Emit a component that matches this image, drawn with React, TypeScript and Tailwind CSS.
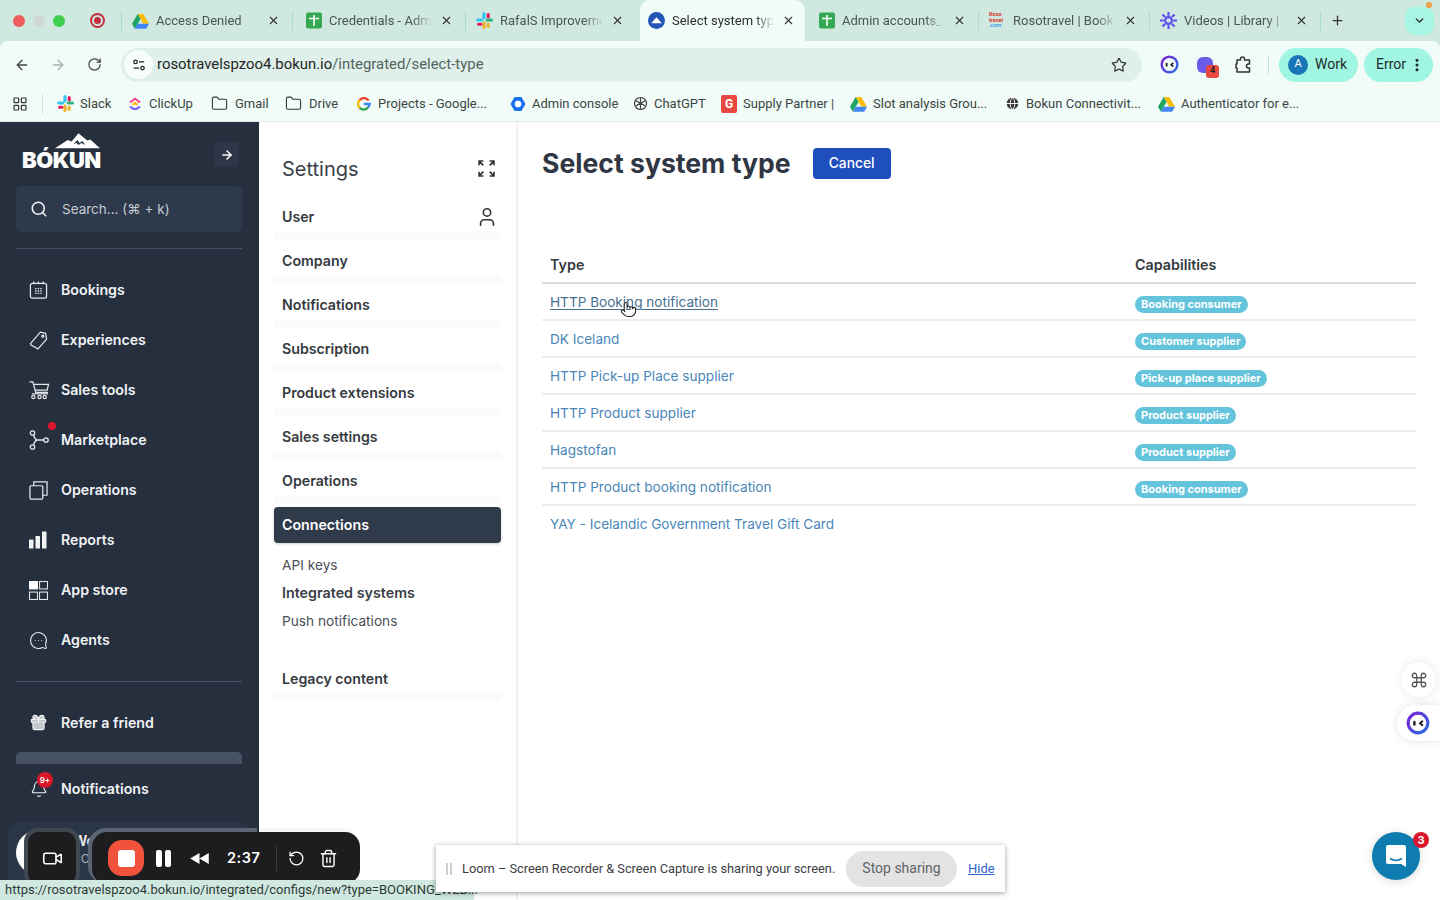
import React from "react";
import { ArrowLeft, ArrowRight, RotateCw, Star, Search, Gift, Bell, User, Video, RotateCcw, Trash2, Command, X, Plus, ChevronDown, Folder, Globe, MoreVertical, LayoutGrid, Pointer, MessageCircleMore } from "lucide-react";

const Drive = () => (
  <svg viewBox="0 0 24 22" className="w-[17px] h-[16px] shrink-0">
    <path d="M8 1h8l8 14h-8z" fill="#fbbc04" />
    <path d="M8 1 0 15l4 7 8-14z" fill="#1fa463" />
    <path d="M8 15h16l-4 7H4z" fill="#4285f4" />
  </svg>
);
const Sheets = () => (
  <svg viewBox="0 0 16 16" className="w-[16px] h-[17px] shrink-0">
    <rect width="16" height="16" rx="2" fill="#34a853" />
    <path d="M3 6h10M8 2.500v11" stroke="#fff" strokeWidth="1.600" />
  </svg>
);
const Slack = () => (
  <svg viewBox="0 0 16 16" className="w-[17px] h-[17px] shrink-0">
    <rect x="0" y="6" width="7" height="3" rx="1.500" fill="#36c5f0" />
    <rect x="6" y="0" width="3" height="7" rx="1.500" fill="#36c5f0" />
    <rect x="9" y="6" width="7" height="3" rx="1.500" fill="#2eb67d" />
    <rect x="10" y="1" width="3" height="5" rx="1.500" fill="#e01e5a" />
    <rect x="6" y="9" width="3" height="7" rx="1.500" fill="#ecb22e" />
    <rect x="1" y="10" width="5" height="3" rx="1.500" fill="#e01e5a" />
    <rect x="10" y="10" width="3" height="5" rx="1.500" fill="#ecb22e" />
  </svg>
);
const ClickUp = () => (
  <svg viewBox="0 0 16 16" className="w-[14px] h-[16px] shrink-0" fill="none" strokeWidth="2.400" strokeLinecap="round">
    <path d="M3 5.500 8 2l5 3.500" stroke="#f9488e" />
    <path d="M3 11.500c3 3.200 7 3.200 10 0" stroke="#7b5cf0" />
    <path d="M6 8.500 8 7l2 1.500" stroke="#ffb300" />
  </svg>
);
const GoogleG = () => (
  <svg viewBox="0 0 16 16" className="w-[14px] h-[14px] shrink-0" fill="none" strokeWidth="2.800">
    <path d="M13.200 4A6.400 6.400 0 0 0 3 3.700" stroke="#ea4335" />
    <path d="M3 3.600a6.400 6.400 0 0 0 0 8.800" stroke="#fbbc04" />
    <path d="M3 12.400a6.400 6.400 0 0 0 9.800-.6" stroke="#34a853" />
    <path d="M12.800 11.800A6.400 6.400 0 0 0 14.400 8H8" stroke="#4285f4" />
  </svg>
);
const AdminHex = () => (
  <svg viewBox="0 0 16 16" className="w-[16px] h-[16px] shrink-0">
    <path d="M4.500 1h7L15.500 8l-4 7h-7L.5 8z" fill="#1a73e8" />
    <circle cx="8" cy="8" r="3.200" fill="#fff" />
  </svg>
);
const GptIcon = () => (
  <svg viewBox="0 0 16 16" className="w-[15px] h-[15px] shrink-0" fill="none" stroke="#444" strokeWidth="1.300">
    <circle cx="8" cy="8" r="6.400" />
    <path d="M8 1.600v6l5 3M8 7.600l-5 3M3 5l5 2.600L13 5M8 7.600v6.800" />
  </svg>
);
const RedG = () => (
  <span className="w-[16px] h-[18px] rounded-[2px] bg-[#e8483f] text-white text-[12px] font-bold flex items-center justify-center shrink-0">G</span>
);
const RosoIcon = () => (
  <span className="w-[17px] h-[17px] shrink-0 flex flex-col text-[5.500px] leading-[5.500px] font-bold">
    <span className="text-[#d8352a]">Roso</span>
    <span className="text-[#d8352a]">travel</span>
    <span className="text-[#4aa3df]">.com</span>
  </span>
);
const BurstIcon = () => (
  <svg viewBox="0 0 16 16" className="w-[17px] h-[17px] shrink-0" fill="none" stroke="#5b4df0" strokeWidth="2">
    <circle cx="8" cy="8" r="3.200" />
    <path d="M8 0v3.500M8 12.500V16M0 8h3.500M12.500 8H16M2.300 2.300l2.500 2.500M11.200 11.200l2.500 2.500M2.300 13.700l2.500-2.500M11.200 4.800l2.500-2.500" />
  </svg>
);
const BokunTab = () => (
  <svg viewBox="0 0 16 16" className="w-[17px] h-[17px] shrink-0">
    <circle cx="8" cy="8" r="8" fill="#2456b8" />
    <path d="M3 10.500 8 5l5 5.500z" fill="#fff" />
  </svg>
);
const Face = ({ cls }: { cls: string }) => (
  <svg viewBox="0 0 20 20" className={cls} fill="none">
    <defs>
      <linearGradient id="ring" x1="0" y1="0" x2="1" y2="1">
        <stop offset="0" stopColor="#7c22d8" />
        <stop offset="1" stopColor="#2b6fe0" />
      </linearGradient>
    </defs>
    <circle cx="10" cy="10" r="8.200" stroke="url(#ring)" strokeWidth="2.600" />
    <rect x="6" y="8.200" width="2" height="4" rx="1" fill="#222" />
    <path d="M14 8.200 11.800 10.200 14 12.200" stroke="#222" strokeWidth="1.700" />
  </svg>
);

const tabs = [
  { t: "Access Denied", i: <Drive />, after: "w-[1px] h-[20px] mr-[2px] bg-[#a9dccd] shrink-0" },
  { t: "Credentials - Adm", i: <Sheets />, after: "w-[1px] h-[20px] bg-[#a9dccd] shrink-0" },
  { t: "RafalS Improveme", i: <Slack />, after: "w-[1px] shrink-0" },
  { t: "Select system typ", i: <BokunTab />, active: true, after: "w-[3px] shrink-0" },
  { t: "Admin accounts_", i: <Sheets />, after: "w-[1px] h-[20px] bg-[#a9dccd] shrink-0" },
  { t: "Rosotravel | Book", i: <RosoIcon />, after: "w-[1px] h-[20px] bg-[#a9dccd] shrink-0" },
  { t: "Videos | Library |", i: <BurstIcon />, after: "w-[1px] h-[20px] bg-[#a9dccd] shrink-0" },
];

const bookmarks = [
  { t: "Slack", i: <Slack />, w: "w-[71px]", g: "gap-[6px]" },
  { t: "ClickUp", i: <ClickUp />, w: "w-[83px]", g: "gap-[7px]" },
  { t: "Gmail", i: <Folder className="w-[17px] h-[17px] text-[#333] shrink-0" strokeWidth={1.500} />, w: "w-[74px]", g: "gap-[7px]" },
  { t: "Drive", i: <Folder className="w-[17px] h-[17px] text-[#333] shrink-0" strokeWidth={1.500} />, w: "w-[72px]", g: "gap-[7px]" },
  { t: "Projects - Google...", i: <GoogleG />, w: "w-[153px]", g: "gap-[7px]" },
  { t: "Admin console", i: <AdminHex />, w: "w-[123px]", g: "gap-[6px]" },
  { t: "ChatGPT", i: <GptIcon />, w: "w-[88px]", g: "gap-[6px]" },
  { t: "Supply Partner |", i: <RedG />, w: "w-[129px]", g: "gap-[6px]" },
  { t: "Slot analysis Grou...", i: <Drive />, w: "w-[155px]", g: "gap-[6px]" },
  { t: "Bokun Connectivit...", i: <Globe className="w-[15px] h-[15px] text-white fill-[#333] shrink-0" strokeWidth={1.500} />, w: "w-[153px]", g: "gap-[6px]" },
  { t: "Authenticator for e...", i: <Drive />, w: "w-[150px]", g: "gap-[6px]" },
];

const stroke = { fill: "none", stroke: "#e5e7eb", strokeWidth: 1.300 };
const Calendar = () => (
  <svg viewBox="0 0 20 20" className="w-[19px] h-[19px]" {...stroke}>
    <rect x="1.500" y="2.500" width="17" height="15.500" rx="2" />
    <path d="M5 0.500v3M10 0.500v3M15 0.500v3" />
    <path d="M6.500 8h7M6.500 10.500h7M6.500 13h7" strokeDasharray="1.500 1.200" strokeWidth="1.500" />
  </svg>
);
const TagIcon = () => (
  <svg viewBox="0 0 20 20" className="w-[19px] h-[19px]" {...stroke}>
    <path d="M12 1.200 17.500 2.500 18.500 8.500 9.500 18.800 2 14.800 1.500 13.200z" strokeLinejoin="round" />
    <circle cx="14.500" cy="5.500" r="1.100" />
  </svg>
);
const Cart = () => (
  <svg viewBox="0 0 22 20" className="w-[21px] h-[19px]" {...stroke}>
    <path d="M0.500 1h3.500l3 11h13" />
    <path d="M5 3.500h15.500l-1.500 6H6.500" />
    <path d="M3 13.500h17" />
    <circle cx="4.500" cy="16.800" r="1.700" />
    <circle cx="11" cy="16.800" r="1.700" />
    <circle cx="16.500" cy="16.800" r="1.700" />
  </svg>
);
const Market = () => (
  <svg viewBox="0 0 20 20" className="w-[20px] h-[20px]" {...stroke}>
    <circle cx="3.500" cy="3" r="2.200" />
    <circle cx="3.500" cy="17" r="2.200" />
    <circle cx="17" cy="10" r="2.200" />
    <path d="M4.500 5c1 3 2 5 4 5h6.300M4.500 15c1-3 2-5 4-5" />
  </svg>
);
const Stack = () => (
  <svg viewBox="0 0 20 20" className="w-[19px] h-[19px]" {...stroke}>
    <rect x="1" y="5" width="13.500" height="14" rx="1" />
    <path d="M5 5V1h14v14h-4.500" />
  </svg>
);
const Bars = () => (
  <svg viewBox="0 0 18 18" className="w-[18px] h-[18px]" fill="#f1f3f5">
    <rect x="0" y="8.500" width="4.500" height="9" rx=".6" />
    <rect x="6.500" y="5" width="4.500" height="12.500" rx=".6" />
    <rect x="13" y="0.500" width="4.500" height="17" rx=".6" />
  </svg>
);
const Apps = () => (
  <svg viewBox="0 0 18 18" className="w-[19px] h-[19px]" fill="none" stroke="#e5e7eb" strokeWidth="1">
    <rect x="0.500" y="0.500" width="7.500" height="7" fill="#fff" stroke="#fff" />
    <rect x="10" y="0.500" width="7.500" height="7" />
    <rect x="0.500" y="10.500" width="7.500" height="7" />
    <rect x="10" y="10.500" width="7.500" height="7" />
  </svg>
);

const nav = [
  { t: "Bookings", i: <Calendar /> },
  { t: "Experiences", i: <TagIcon /> },
  { t: "Sales tools", i: <Cart /> },
  { t: "Marketplace", i: <Market />, dot: true },
  { t: "Operations", i: <Stack /> },
  { t: "Reports", i: <Bars /> },
  { t: "App store", i: <Apps /> },
  { t: "Agents", i: <MessageCircleMore className="w-[19px] h-[19px] text-[#e5e7eb] -scale-x-100" strokeWidth={1.300} /> },
];

const settingsTop = ["Company", "Notifications", "Subscription", "Product extensions", "Sales settings", "Operations"];

const rows = [
  { t: "HTTP Booking notification", c: "Booking consumer", hover: true },
  { t: "DK Iceland", c: "Customer supplier" },
  { t: "HTTP Pick-up Place supplier", c: "Pick-up place supplier" },
  { t: "HTTP Product supplier", c: "Product supplier" },
  { t: "Hagstofan", c: "Product supplier" },
  { t: "HTTP Product booking notification", c: "Booking consumer" },
  { t: "YAY - Icelandic Government Travel Gift Card", c: "" },
];

function SettingItem({ t, right }: { t: string; right?: React.ReactNode }) {
  return (
    <div className="h-[44px] mx-[15px] px-[8px] flex items-center justify-between text-[14.200px] font-semibold text-[#343a40] border-b-[8px] border-[#fbfbfb] pt-[8px] box-border">
      <span>{t}</span>
      {right}
    </div>
  );
}

export default function App() {
  return (
    <div className="relative w-[1440px] h-[900px] overflow-hidden bg-[#cfe8e0] flex flex-col [font-family:Inter,sans-serif]">
      {/* Tab strip */}
      <div className="h-[41px] shrink-0 bg-[#cfe8e0] flex items-center relative [font-family:Roboto,sans-serif]">
        <div className="w-[98px] pl-[13px] flex items-center gap-[8px] shrink-0">
          <span className="w-[12px] h-[12px] rounded-full bg-[#ee5a5e]" />
          <span className="w-[12px] h-[12px] rounded-full bg-[#d2d7d5]" />
          <span className="w-[12px] h-[12px] rounded-full bg-[#3fce4f]" />
        </div>
        <div className="w-[23px] shrink-0 -ml-[8px] mr-[8px] flex justify-center -translate-x-[4px]">
          <span className="w-[15px] h-[15px] rounded-full border-[2px] border-[#c2303f] flex items-center justify-center">
            <span className="w-[7px] h-[7px] rounded-full bg-[#c2303f]" />
          </span>
        </div>
        <span className="w-[1px] h-[20px] bg-[#a9dccd] shrink-0" />
        {tabs.map((tab) => (
          <React.Fragment key={tab.t}>
            <div
              className={
                tab.active
                  ? "ml-[3px] w-[165px] h-[41px] self-end bg-[#f1fbf8] rounded-t-[10px] flex items-center pl-[8px] pr-[10px] shrink-0"
                  : "w-[170px] h-[41px] flex items-center pl-[10px] pr-[12px] shrink-0"
              }
            >
              <span className="w-[17px] flex justify-center shrink-0">{tab.i}</span>
              <span
                className={
                  tab.active
                    ? "ml-[7px] flex-1 min-w-0 whitespace-nowrap text-[13px] text-[#2b2f2e] [mask-image:linear-gradient(to_right,black_75%,transparent_93%)]"
                    : "ml-[7px] flex-1 min-w-0 whitespace-nowrap text-[13px] text-[#4a5653] [mask-image:linear-gradient(to_right,black_75%,transparent_93%)]"
                }
              >
                {tab.t}
              </span>
              <X className="w-[13px] h-[13px] text-[#333] shrink-0" strokeWidth={2} />
            </div>
            <span className={tab.after} />
          </React.Fragment>
        ))}
        <Plus className="w-[15px] h-[15px] text-[#333] ml-[9px] shrink-0" strokeWidth={2} />
        <div className="ml-auto mr-[6px] relative w-[29px] h-[28px] rounded-[9px] bg-[#a8f5e4] flex items-center justify-center">
          <ChevronDown className="w-[13px] h-[13px] text-[#222]" strokeWidth={2.500} />
          <span className="absolute -top-[5px] right-[2px] w-[6px] h-[6px] rounded-full bg-[#f0a040]" />
        </div>
      </div>

      {/* Toolbar */}
      <div className="h-[41px] shrink-0 bg-[#f1fbf8] flex items-center rounded-tl-[8px] rounded-tr-[8px] pl-[14px] pr-[7px] pt-[6px] [font-family:Roboto,sans-serif]">
        <ArrowLeft className="w-[16px] h-[16px] text-[#444] shrink-0" strokeWidth={2} />
        <ArrowRight className="w-[16px] h-[16px] text-[#a5b0ad] shrink-0 ml-[20px]" strokeWidth={2} />
        <RotateCw className="w-[15px] h-[15px] text-[#444] shrink-0 ml-[21px]" strokeWidth={2} />
        <div className="ml-[19px] w-[1021px] h-[34px] shrink-0 bg-[#dff0ea] rounded-full flex items-center pl-[3px] pr-[15px]">
          <span className="w-[29px] h-[29px] rounded-full bg-[#f7fdfb] flex items-center justify-center shrink-0">
            <svg viewBox="0 0 16 16" className="w-[14px] h-[14px]" fill="none" stroke="#222" strokeWidth="1.400">
              <circle cx="4" cy="4.500" r="2" />
              <path d="M8 4.500h6M2 11.500h6" />
              <circle cx="12" cy="11.500" r="2" />
            </svg>
          </span>
          <span className="ml-[4px] text-[14.900px] text-[#1f2624] whitespace-nowrap">
            rosotravelspzoo4.bokun.io<span className="text-[#55625e]">/integrated/select-type</span>
          </span>
          <Star className="w-[16px] h-[16px] text-[#333] ml-auto" strokeWidth={1.800} />
        </div>
        <Face cls="w-[19px] h-[19px] ml-[18px] shrink-0" />
        <div className="relative ml-[18px] shrink-0">
          <span className="block w-[16px] h-[16px] rounded-[6px] bg-[#6a5be8]" />
          <span className="absolute -bottom-[5px] -right-[6px] w-[13px] h-[13px] rounded-[3px] bg-[#e8483f] text-[9px] font-semibold text-[#222] flex items-center justify-center">4</span>
        </div>
        <svg viewBox="0 0 18 18" className="w-[18px] h-[18px] ml-[21px] shrink-0" fill="none" stroke="#333" strokeWidth="1.500" strokeLinejoin="round">
          <path d="M6.500 4V3a2 2 0 0 1 4 0v1h5v4h-1a2 2 0 0 0 0 4h1v4H3v-4h-1V8h1V4z" />
        </svg>
        <span className="w-[1px] h-[20px] bg-[#c4e8dc] ml-[16px] shrink-0" />
        <div className="ml-[10px] w-[79px] h-[34px] rounded-full bg-[#a0f5e3] flex items-center pl-[9px] gap-[7px] shrink-0">
          <span className="w-[20px] h-[20px] rounded-full bg-[#1976b8] text-white text-[11px] flex items-center justify-center">A</span>
          <span className="text-[14px] text-[#1e2a27]">Work</span>
        </div>
        <div className="ml-[6px] w-[69px] h-[34px] rounded-full bg-[#a0f5e3] flex items-center pl-[12px] shrink-0">
          <span className="text-[14px] text-[#1e2a27]">Error</span>
          <MoreVertical className="w-[16px] h-[16px] text-[#222] ml-[3px]" strokeWidth={2.500} />
        </div>
      </div>

      {/* Bookmarks */}
      <div className="h-[40px] shrink-0 bg-[#f1fbf8] flex items-center pl-[12px] pt-[4px] border-b border-[#e4ecea] [font-family:Roboto,sans-serif]">
        <LayoutGrid className="w-[16px] h-[16px] text-[#333] shrink-0" strokeWidth={1.800} />
        <span className="w-[1px] h-[20px] bg-[#c4e8dc] ml-[14px] mr-[14px] shrink-0" />
        {bookmarks.map((b) => (
          <div key={b.t} className={`${b.w} ${b.g} flex items-center shrink-0 text-[13px] text-[#3b4643] whitespace-nowrap`}>
            {b.i}
            <span>{b.t}</span>
          </div>
        ))}
      </div>

      {/* Page */}
      <div className="flex-1 flex min-h-0 bg-white">
        {/* Sidebar */}
        <aside className="w-[259px] shrink-0 bg-[#262f3e] flex flex-col pl-[16px] pr-[17px] text-[#f1f3f5]">
          <div className="h-[64px] shrink-0 flex items-start justify-between pt-[10px] pl-[6px]">
            <div className="relative w-[80px] h-[38px]">
              <svg viewBox="0 0 46 16" className="absolute left-[33px] top-[1px] w-[45px] h-[16px]" fill="#fff">
                <path d="M0 15.500 13 7l4 1.500L24 0l9 7.500 3-1 10 9z" />
                <path d="M19 11l4-4 2 3 3-2 3 4-4-2-3 2-2-2z" fill="#262f3e" />
              </svg>
              <span className="absolute left-0 top-[14px] text-[22px] leading-[28px] font-black tracking-[-0.5px] text-white">BÓKUN</span>
            </div>
            <span className="w-[25px] h-[25px] mr-[3px] mt-[10px] rounded-[4px] bg-[#2c3647] flex items-center justify-center">
              <ArrowRight className="w-[14px] h-[14px] text-white" strokeWidth={2.500} />
            </span>
          </div>
          <div className="h-[46px] shrink-0 rounded-[5px] bg-[#2e394c] flex items-center pl-[14px] gap-[14px]">
            <Search className="w-[18px] h-[18px] text-[#f1f3f5]" strokeWidth={2} />
            <span className="text-[13.500px] text-[#c6ccd4]">Search... (⌘ + k)</span>
          </div>
          <div className="h-[1px] shrink-0 bg-[#465062] mt-[16px] mb-[16px]" />
          {nav.map((n) => (
            <div key={n.t} className="h-[50px] shrink-0 flex items-center relative">
              <span className="w-[45px] pl-[13px] shrink-0 flex items-center">{n.i}</span>
              <span className="text-[14.200px] font-semibold">{n.t}</span>
              {n.dot && <span className="absolute left-[32px] top-[7px] w-[8px] h-[8px] rounded-full bg-[#d8162c]" />}
            </div>
          ))}
          <div className="h-[1px] shrink-0 bg-[#465062] mt-[16px]" />
          <div className="h-[41px] shrink-0 flex items-center mt-[20px]">
            <span className="w-[45px] pl-[13px] shrink-0 flex items-center">
              <Gift className="w-[19px] h-[19px] text-[#f1f3f5] fill-[#c4c9cf]" strokeWidth={1.500} />
            </span>
            <span className="text-[14.200px] font-semibold">Refer a friend</span>
          </div>
          <div className="h-[12px] shrink-0 bg-[#465162] rounded-t-[5px] mt-[9px]" />
          <div className="h-[50px] shrink-0 flex items-center relative">
            <span className="w-[45px] pl-[14px] shrink-0 flex items-center">
              <Bell className="w-[18px] h-[18px] text-[#f1f3f5]" strokeWidth={1.500} />
            </span>
            <span className="text-[14.200px] font-semibold">Notifications</span>
            <span className="absolute left-[21px] top-[8px] w-[16px] h-[16px] rounded-full bg-[#d8162c] text-[8px] text-white font-semibold flex items-center justify-center">9+</span>
          </div>
          <div className="mt-[8px] -mx-[8px] h-[80px] shrink-0 rounded-[12px] bg-[#2a3546] pl-[8px] pt-[8px] flex gap-[12px]">
            <span className="w-[45px] h-[45px] rounded-full bg-white shrink-0" />
            <div className="text-[14px] font-semibold leading-[18px] pt-[2px]">
              <div>Welcome</div>
              <div className="text-[12px] font-normal text-[#aab2bd]">ROSO</div>
            </div>
          </div>
        </aside>

        {/* Settings column */}
        <nav className="w-[259px] shrink-0 border-r-[2px] border-[#f1f1f3] bg-white flex flex-col">
          <div className="h-[73px] pl-[23px] pr-[21px] pt-[33px] flex items-start justify-between shrink-0">
            <span className="text-[20px] leading-[28px] text-[#3a4048]">Settings</span>
            <svg viewBox="0 0 16 16" className="w-[17px] h-[17px] mt-[5px]" fill="none" stroke="#333" strokeWidth="1.500">
              <path d="M1 5V1h4M15 5V1h-4M1 11v4h4M15 11v4h-4M1 1l4 4M15 1l-4 4M1 15l4-4M15 15l-4-4" />
            </svg>
          </div>
          <SettingItem t="User" right={<User className="w-[22px] h-[22px] text-[#333] -mr-[5px]" strokeWidth={1.800} />} />
          {settingsTop.map((t) => (
            <SettingItem key={t} t={t} />
          ))}
          <div className="mt-[4px] mx-[15px] h-[36px] rounded-[4px] bg-[#2f3a4b] shadow-[0_1px_3px_rgba(0,0,0,0.2)] text-white text-[14.200px] font-semibold flex items-center px-[8px] shrink-0">
            Connections
          </div>
          <div className="pl-[23px] pt-[8px] flex flex-col text-[13.700px] text-[#4a5058] shrink-0">
            <span className="h-[28px] flex items-center">API keys</span>
            <span className="h-[28px] flex items-center font-semibold text-[14.300px] text-[#3a4048]">Integrated systems</span>
            <span className="h-[28px] flex items-center">Push notifications</span>
          </div>
          <div className="mt-[22px] shrink-0">
            <SettingItem t="Legacy content" />
          </div>
        </nav>

        {/* Main */}
        <main className="flex-1 pl-[24px] pr-[24px] pt-[25px] min-w-0 bg-white">
          <div className="flex items-center gap-[22px] h-[32px]">
            <h1 className="text-[26.600px] leading-[32px] font-bold text-[#2f3644]">Select system type</h1>
            <button className="w-[78px] h-[31px] rounded-[4px] bg-[#1f4fbf] text-white text-[13.800px] font-medium">Cancel</button>
          </div>
          <div className="mt-[67px]">
            <div className="h-[38px] flex items-center border-b-[2px] border-[#dddddd] pt-[2px] text-[14.300px] font-semibold text-[#343a40]">
              <span className="w-[593px] pl-[8px] shrink-0">Type</span>
              <span>Capabilities</span>
            </div>
            {rows.map((r, idx) => (
              <div key={r.t} className={idx === rows.length - 1 ? "h-[37px] flex items-center border-b-[2px] border-transparent" : "h-[37px] flex items-center border-b-[2px] border-[#ececec]"}>
                <span className={r.hover ? "w-[593px] pl-[8px] mt-[2px] shrink-0 text-[13.600px] text-[#47708f] underline underline-offset-2" : "w-[593px] pl-[8px] mt-[2px] shrink-0 text-[13.600px] text-[#4a86b8]"}>
                  {r.t}
                </span>
                {r.c && (
                  <span className="h-[17px] mt-[6px] rounded-full bg-[#64c4dc] px-[6px] text-[11px] leading-[17px] font-bold text-white whitespace-nowrap">{r.c}</span>
                )}
              </div>
            ))}
          </div>
        </main>
      </div>

      {/* Hand cursor */}
      <Pointer className="absolute left-[620px] top-[300px] w-[17px] h-[19px] text-[#222] fill-white" strokeWidth={1.500} />

      {/* Recorder */}
      <div className="absolute left-[24px] top-[828px] w-[56px] h-[60px] rounded-[14px] border-[4px] border-[#5a6472]/60 bg-[#1d1d1f] flex items-center justify-center">
        <Video className="w-[21px] h-[21px] text-white" strokeWidth={1.800} />
      </div>
      <div className="absolute left-[88px] top-[828px] w-[272px] h-[56px] rounded-t-[18px] rounded-bl-[18px] pt-[4px] pl-[4px] bg-[linear-gradient(to_right,#5a6472_62%,rgba(0,0,0,0.03)_62%)]">
        <div className="w-full h-[52px] rounded-[15px] bg-[#1d1d1f] flex items-center pl-[16px] text-white">
          <span className="w-[36px] h-[36px] rounded-[14px] bg-[#f0523c] flex items-center justify-center shrink-0">
            <span className="w-[17px] h-[17px] rounded-[3px] bg-white" />
          </span>
          <span className="ml-[12px] flex gap-[3px] shrink-0">
            <span className="w-[6px] h-[17px] rounded-[2px] bg-white" />
            <span className="w-[6px] h-[17px] rounded-[2px] bg-white" />
          </span>
          <svg viewBox="0 0 22 14" className="ml-[18px] w-[21px] h-[13px] shrink-0" fill="#fff">
            <path d="M11 1v12L1 7zM21 1v12L11 7z" />
          </svg>
          <span className="ml-[17px] w-[34px] text-[14.500px] font-semibold tracking-[0.5px] shrink-0">2:37</span>
          <span className="ml-[15px] w-[1px] h-[26px] bg-[#3a3a3c] shrink-0" />
          <RotateCcw className="ml-[11px] w-[17px] h-[17px] shrink-0" strokeWidth={1.800} />
          <Trash2 className="ml-[14px] w-[19px] h-[19px] shrink-0" strokeWidth={1.800} />
        </div>
      </div>

      {/* Status bar */}
      <div className="absolute left-0 bottom-0 w-[474px] h-[20px] bg-[#cfe8e0] rounded-tr-[3px] flex items-center pl-[5px] text-[13px] text-[#2f3a37] whitespace-nowrap [font-family:Roboto,sans-serif]">
        https://rosotravelspzoo4.bokun.io/integrated/configs/new?type=BOOKING_WEB...
      </div>

      {/* Loom bar */}
      <div className="absolute left-[436px] top-[845px] w-[569px] h-[47px] bg-white shadow-[0_1px_5px_rgba(0,0,0,0.4)] flex items-center pl-[10px] text-[#3c4043] [font-family:Roboto,sans-serif]">
        <span className="w-[6px] h-[12px] border-x-[2px] border-[#cfcfcf] shrink-0" />
        <span className="ml-[10px] text-[12.800px] whitespace-nowrap shrink-0 w-[380px]">Loom – Screen Recorder &amp; Screen Capture is sharing your screen.</span>
        <span className="ml-[4px] w-[111px] h-[36px] rounded-full bg-[#e3e3e3] text-[14px] text-[#5f6368] flex items-center justify-center shrink-0">Stop sharing</span>
        <span className="ml-[11px] text-[13px] text-[#2f62c8] underline">Hide</span>
      </div>

      {/* Right widgets */}
      <div className="absolute left-[1401px] top-[662px] w-[35px] h-[35px] rounded-full bg-white shadow-[0_0_8px_rgba(0,0,0,0.1)] flex items-center justify-center">
        <Command className="w-[18px] h-[18px] text-[#555]" strokeWidth={1.700} />
      </div>
      <div className="absolute left-[1397px] top-[705px] w-[43px] h-[36px] rounded-l-full bg-white shadow-[0_0_8px_rgba(0,0,0,0.12)] flex items-center pl-[9px]">
        <Face cls="w-[24px] h-[24px]" />
      </div>
      <div className="absolute left-[1372px] top-[832px] w-[48px] h-[48px] rounded-full bg-[#0f7cb0] flex items-center justify-center shadow-[0_1px_8px_rgba(0,0,0,0.15)]">
        <svg viewBox="0 0 22 24" className="w-[22px] h-[24px]" fill="#fff">
          <path d="M3 1h16a2 2 0 0 1 2 2v20l-5-3H3a2 2 0 0 1-2-2V3a2 2 0 0 1 2-2z" />
          <path d="M5 14.500c3.500 2.200 8.500 2.200 12 0" stroke="#0f7cb0" strokeWidth="1.500" fill="none" />
        </svg>
      </div>
      <span className="absolute left-[1413px] top-[832px] w-[16px] h-[16px] rounded-full bg-[#d8162c] text-white text-[11px] font-bold flex items-center justify-center">3</span>
    </div>
  );
}
